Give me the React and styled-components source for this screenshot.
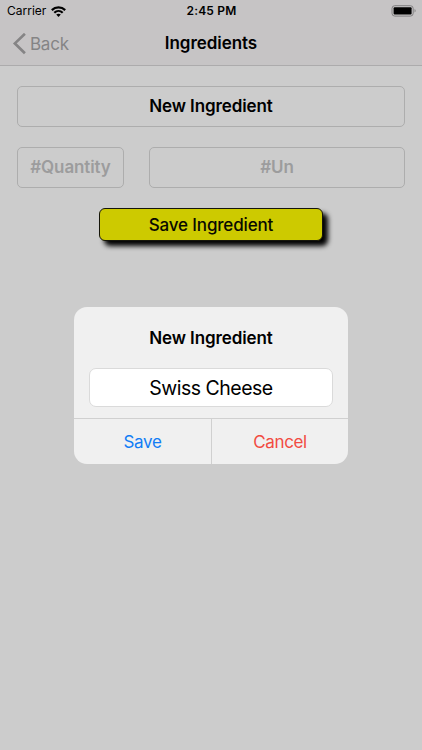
import React from "react";
import styled, { createGlobalStyle } from "styled-components";

const GlobalStyle = createGlobalStyle`
  *, *::before, *::after { box-sizing: border-box; }
  body { margin: 0; background: #cccccc; font-family: Inter, "Liberation Sans", sans-serif; color: #000; }
  button, input { font: inherit; margin: 0; padding: 0; border: 0; border-radius: 0; background: none; color: inherit; }
`;

const Screen = styled.main`
  position: relative;
  width: 422px;
  height: 750px;
  overflow: hidden;
  background: #cccccc;
`;

const Header = styled.header`
  height: 66px;
  background: #c6c4c5;
  border-bottom: 1px solid #acabac;
`;

const StatusBar = styled.div`
  display: grid;
  grid-template-columns: 1fr auto 1fr;
  align-items: center;
  height: 22px;
  padding: 0 6px 0 7px;
`;

const Carrier = styled.div`
  display: flex;
  align-items: center;
  gap: 5px;
  font-size: 12px;
  letter-spacing: 0;
  line-height: 22px;
`;

const Clock = styled.time`
  font-size: 12px;
  font-weight: 600;
  letter-spacing: 0.2px;
  line-height: 22px;
`;

const BatterySlot = styled.div`
  display: flex;
  justify-content: flex-end;
`;

const NavBar = styled.nav`
  display: grid;
  grid-template-columns: 1fr auto 1fr;
  align-items: center;
  height: 43px;
  padding: 0 12px;
`;

const BackButton = styled.button`
  display: flex;
  align-items: center;
  gap: 4px;
  color: #858485;
  font-size: 17px;
  letter-spacing: -0.25px;
`;

const Title = styled.h1`
  margin: 0;
  font-size: 17px;
  font-weight: 600;
  letter-spacing: -0.05px;
  line-height: 21px;
  padding-bottom: 1px;
`;

const Form = styled.form`
  display: flex;
  flex-direction: column;
  padding: 20px 17px 0;
`;

const FieldRow = styled.div`
  display: grid;
  grid-template-columns: ${(p) => p.$columns};
  gap: 25px;
  margin-bottom: 20px;
`;

const Field = styled.button`
  height: 41px;
  padding-bottom: 2px;
  border: 1px solid #adadad;
  border-radius: 5px;
  font-size: 17px;
  font-weight: 600;
  letter-spacing: -0.1px;
  color: ${(p) => (p.$muted ? "#9c9c9d" : "#000")};
`;

const SaveIngredient = styled.button`
  align-self: center;
  width: 224px;
  height: 33px;
  border: 1px solid #15150a;
  border-radius: 6px;
  background: #cdca00;
  box-shadow: 5px 5px 5px #000;
  font-size: 17px;
  font-weight: 500;
  letter-spacing: -0.15px;
  color: #090900;
`;

const Dialog = styled.section`
  position: absolute;
  left: 74px;
  top: 307px;
  display: flex;
  flex-direction: column;
  width: 274px;
  height: 156.5px;
  border-radius: 13px;
  overflow: hidden;
  background: #f0f0f0;
`;

const DialogTitle = styled.h2`
  margin: 0;
  padding-top: 20px;
  font-size: 17px;
  font-weight: 600;
  letter-spacing: -0.1px;
  line-height: 22px;
  text-align: center;
`;

const NameInput = styled.input`
  height: 39px;
  margin: 19px 15px 0;
  border: 1px solid #dadada;
  border-radius: 7px;
  background: #fff;
  font-size: 19.5px;
  letter-spacing: -0.5px;
  text-align: center;
  outline: 0;
`;

const Actions = styled.footer`
  display: grid;
  grid-template-columns: 1fr 1fr;
  flex: 1;
  margin-top: 11px;
  border-top: 1px solid #d0d0d0;
`;

const Action = styled.button`
  padding-top: 1px;
  color: ${(p) => p.$color};
  font-size: 17px;
  letter-spacing: -0.35px;
  & + & { border-left: 1px solid #d0d0d0; letter-spacing: -0.35px; }
`;

const WifiIcon = () => (
  <svg width="15" height="11" viewBox="0 0 15 11" fill="none" stroke="#000" strokeWidth="2.2">
    <path d="M.8 4.1C4.6.4 10.4.4 14.2 4.1" />
    <path d="M3.3 6.7c2.4-2.3 6-2.3 8.4 0" />
    <path d="M7.5 10.9 5.2 8.6c1.3-1.2 3.3-1.2 4.6 0Z" fill="#000" stroke="none" />
  </svg>
);

const BatteryIcon = () => (
  <svg width="25" height="12" viewBox="0 0 25 12">
    <rect x="1" y=".7" width="21.2" height="10.4" rx="2.8" fill="none" stroke="#807f80" />
    <rect x="2.6" y="2.3" width="18" height="7.2" rx="1" fill="#000" />
    <path d="M23.6 4.1c1.3.4 1.3 3 0 3.4Z" fill="#777" />
  </svg>
);

const ChevronIcon = () => (
  <svg width="14" height="22" viewBox="0 0 14 22" fill="none" stroke="currentColor" strokeWidth="2.7">
    <path d="M12.9 .8 2.9 10.4l10 9.8" />
  </svg>
);

export default function App() {
  return (
    <Screen>
      <GlobalStyle />
      <Header>
        <StatusBar>
          <Carrier>Carrier<WifiIcon /></Carrier>
          <Clock>2:45 PM</Clock>
          <BatterySlot><BatteryIcon /></BatterySlot>
        </StatusBar>
        <NavBar>
          <BackButton><ChevronIcon />Back</BackButton>
          <Title>Ingredients</Title>
        </NavBar>
      </Header>
      <Form>
        <FieldRow $columns="1fr">
          <Field type="button">New Ingredient</Field>
        </FieldRow>
        <FieldRow $columns="107px 1fr">
          <Field type="button" $muted>#Quantity</Field>
          <Field type="button" $muted>#Un</Field>
        </FieldRow>
        <SaveIngredient type="button">Save Ingredient</SaveIngredient>
      </Form>
      <Dialog>
        <DialogTitle>New Ingredient</DialogTitle>
        <NameInput defaultValue="Swiss Cheese" />
        <Actions>
          <Action $color="#127df5">Save</Action>
          <Action $color="#f24b42">Cancel</Action>
        </Actions>
      </Dialog>
    </Screen>
  );
}
